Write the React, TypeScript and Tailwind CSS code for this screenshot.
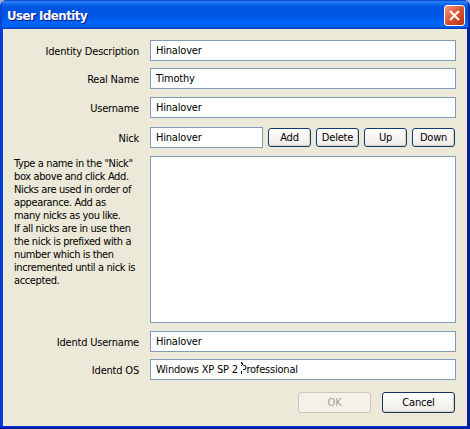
import type { ReactNode } from "react";

function Field({ label, value, className, children }: { label: string; value: string; className: string; children?: ReactNode }) {
  return (
    <div className={`flex h-[21px] ${className}`}>
      <label className="w-[136px] shrink-0 pt-[5px] text-right leading-[14px]">{label}</label>
      <div className={`relative ml-[11px] h-[21px] border border-[#7f9db9] bg-white pl-[5px] leading-[19px] ${children ? "w-[113px]" : "w-[306px]"}`}>
        {value}
        {label === "Identd OS" && (
          <svg className="absolute left-[89px] top-[2px]" width="4" height="13" viewBox="0 0 4 13" shapeRendering="crispEdges">
            <path d="M0 0h3v13H0z" fill="#fff" />
            <path d="M1 0h1v1h1v2H2V2H1zM1 3h1v1H1zM1 9h1v3H1z" fill="#000" />
          </svg>
        )}
      </div>
      {children}
    </div>
  );
}

function SmallButton({ children }: { children: string }) {
  return (
    <button className="h-[19px] w-[43px] rounded-[3px] border border-[#123c70] bg-linear-to-b from-white to-[#eeebe5] text-center leading-[18px] shadow-[inset_-1px_-1px_0_#d6d0c5]">
      {children}
    </button>
  );
}

export default function App() {
  return (
    <div className="h-[429px] w-[470px] bg-[#9da9c8]">
      <main className="flex h-[429px] w-[470px] flex-col overflow-hidden rounded-t-[7px] bg-linear-to-r from-[#0831d9] via-[#0855dd] via-[1%] to-[#001ea0] font-['DejaVu_Sans_Condensed','DejaVu_Sans',sans-serif] text-[11px] tracking-[-0.2px] text-black">
        <header className="flex h-[29px] shrink-0 items-start justify-between bg-[linear-gradient(180deg,#0831b9_0%,#2c84ff_6%,#1470f0_12%,#0054e3_24%,#0055e5_55%,#0066ff_82%,#0062f5_91%,#0036bd_100%)] pl-[7px] pr-[5px] shadow-[inset_2px_0_0_#0644ce,inset_-2px_0_0_#002dab]">
          <h1 className="pt-[8px] text-[13px] font-bold leading-[16px] tracking-[-0.45px] text-white [text-shadow:1px_1px_0_#0a1883]">User Identity</h1>
          <button aria-label="Close" className="mt-[5px] flex h-[21px] w-[21px] items-center justify-center rounded-[3px] border border-white bg-linear-to-br from-[#f09a7f] via-[#dc5030] to-[#b93310]">
            <svg width="13" height="13" viewBox="0 0 13 13">
              <path d="M2 2l9 9M11 2l-9 9" stroke="#fff" strokeWidth="2.1" />
            </svg>
          </button>
        </header>
        <section className="ml-[3px] h-[397px] w-[464px] bg-[#ece9d8]">
          <Field className="mt-[11px]" label="Identity Description" value="Hinalover" />
          <Field className="mt-[7px]" label="Real Name" value="Timothy" />
          <Field className="mt-[8px]" label="Username" value="Hinalover" />
          <Field className="mt-[9px]" label="Nick" value="Hinalover">
            <div className="ml-[5px] mt-px flex gap-[5px]">
              <SmallButton>Add</SmallButton>
              <SmallButton>Delete</SmallButton>
              <SmallButton>Up</SmallButton>
              <SmallButton>Down</SmallButton>
            </div>
          </Field>
          <div className="mt-[8px] flex h-[167px]">
            <p className="w-[147px] shrink-0 whitespace-nowrap pl-[11px] pt-px leading-[13px] tracking-[-0.38px]">
              Type a name in the "Nick"<br />
              box above and click Add.<br />
              Nicks are used in order of<br />
              appearance. Add as<br />
              many nicks as you like.<br />
              If all nicks are in use then<br />
              the nick is prefixed with a<br />
              number which is then<br />
              incremented until a nick is<br />
              accepted.
            </p>
            <div className="w-[306px] border border-[#7f9db9] bg-white" />
          </div>
          <Field className="mt-[8px]" label="Identd Username" value="Hinalover" />
          <Field className="mt-[7px]" label="Identd OS" value="Windows XP SP 2 Professional" />
          <div className="mt-[12px] flex justify-end gap-[11px] pr-[12px]">
            <button disabled className="h-[21px] w-[73px] rounded-[3px] border border-[#c9c7ba] bg-[#f3f1e8] leading-[20px] text-[#a1a192]">OK</button>
            <button className="h-[21px] w-[73px] rounded-[3px] border border-[#17345f] bg-linear-to-b from-white to-[#eeebe5] leading-[20px] shadow-[inset_-1px_-1px_0_#d6d0c5]">Cancel</button>
          </div>
        </section>
        <div className="h-[3px] bg-linear-to-b from-[#0831d9] to-[#001590]" />
      </main>
    </div>
  );
}
